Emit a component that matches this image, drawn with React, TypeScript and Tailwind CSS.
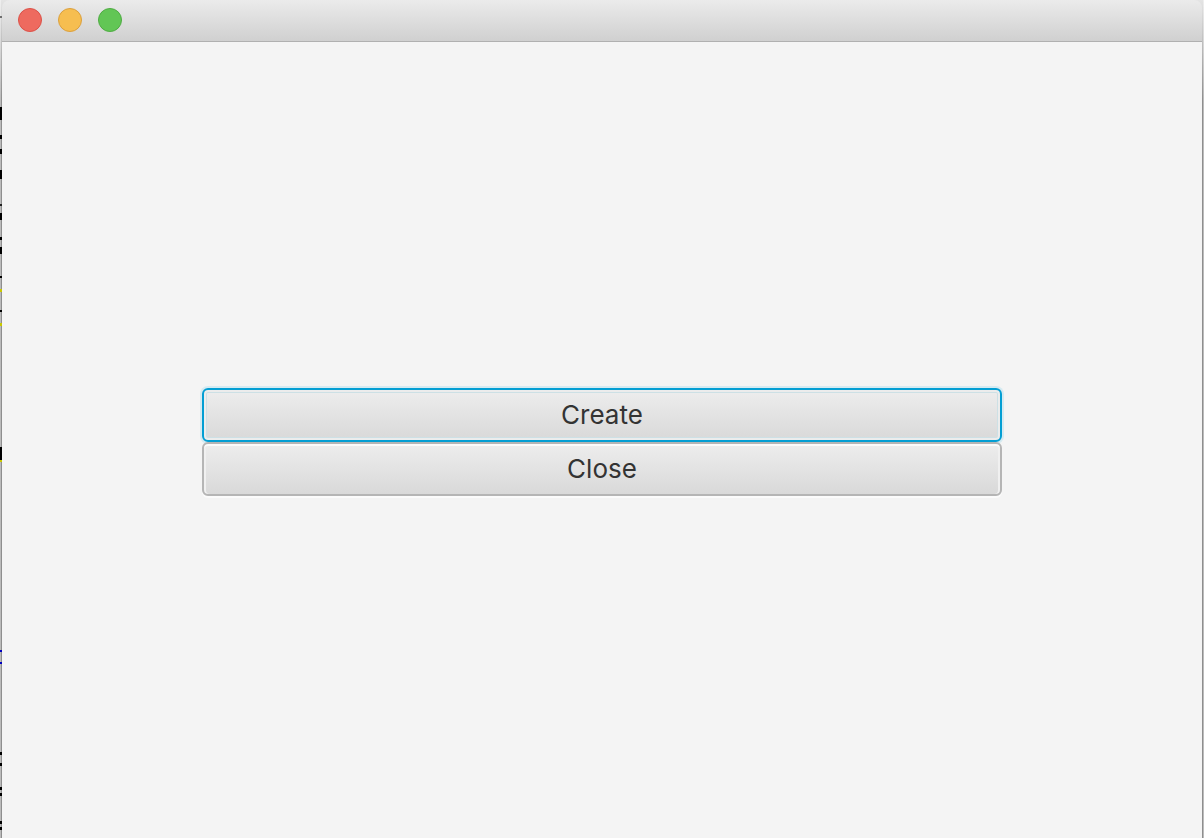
const marks: { y: number; h: number; color: string }[] = [
  { y: 16, h: 2, color: "#6f6f6f" },
  { y: 107, h: 13, color: "#000000" },
  { y: 135, h: 4, color: "#000000" },
  { y: 149, h: 5, color: "#000000" },
  { y: 170, h: 9, color: "#000000" },
  { y: 204, h: 2, color: "#222222" },
  { y: 213, h: 7, color: "#000000" },
  { y: 237, h: 3, color: "#000000" },
  { y: 247, h: 7, color: "#000000" },
  { y: 276, h: 2, color: "#000000" },
  { y: 289, h: 3, color: "#c9c900" },
  { y: 310, h: 2, color: "#000000" },
  { y: 323, h: 3, color: "#c9c900" },
  { y: 447, h: 13, color: "#000000" },
  { y: 460, h: 2, color: "#c9c900" },
  { y: 650, h: 2, color: "#0000c0" },
  { y: 662, h: 2, color: "#0000c0" },
  { y: 752, h: 3, color: "#000000" },
  { y: 763, h: 3, color: "#000000" },
  { y: 787, h: 3, color: "#000000" },
  { y: 793, h: 3, color: "#000000" },
  { y: 821, h: 3, color: "#000000" },
  { y: 827, h: 3, color: "#000000" },
];

const buttonBase =
  "relative h-[54px] w-full rounded-[6px] border-2 bg-linear-to-b from-[#eeeeee] to-[#d8d8d8] bg-origin-border text-[26px] leading-8 text-[#333333] outline-none";

export default function App() {
  return (
    <div className="relative flex min-h-screen flex-col bg-linear-to-b from-[#e4e4e4] via-[#8e8e8e] via-12% to-[#8e8e8e] px-[2px] font-['Inter','Liberation_Sans',sans-serif]">
      <svg className="absolute inset-y-0 left-0 h-full w-[2px]" aria-hidden="true">
        <rect width="1" height="100%" fill="#ffffff" opacity="0.4" />
        {marks.map((m) => (
          <rect key={m.y} y={m.y} width="2" height={m.h} fill={m.color} />
        ))}
      </svg>
      <div className="absolute inset-y-0 right-0 w-px bg-white/40" />
      <header className="flex h-[42px] items-start gap-4 rounded-t-[8px] border-b border-[#b0b0b0] bg-linear-to-b from-[#ebebeb] to-[#d0d0d0] px-4 pt-2">
        <button type="button" aria-label="Close window" className="size-6 rounded-full border border-[#dc5148] bg-[#ee6a5f]" />
        <button type="button" aria-label="Minimize window" className="size-6 rounded-full border border-[#dba03e] bg-[#f6be50]" />
        <button type="button" aria-label="Zoom window" className="size-6 rounded-full border border-[#4fac43] bg-[#62c655]" />
      </header>
      <main className="flex flex-1 flex-col items-center justify-center bg-[#f4f4f4] pt-1">
        <div className="flex w-2/3 flex-col">
          <button
            type="button"
            className={`${buttonBase} border-[#039ed3] shadow-[0_0_0_2px_#d5eaf1,inset_0_0_0_2px_#ececec,inset_0_0_0_3px_#cde0e5]`}
          >
            Create
          </button>
          <button
            type="button"
            className={`${buttonBase} border-[#b5b5b5] shadow-[0_2px_0_#fbfbfb,inset_0_2px_0_#fbfbfb,inset_2px_0_0_#f0f0f0,inset_-2px_0_0_#f0f0f0]`}
          >
            Close
          </button>
        </div>
      </main>
    </div>
  );
}
